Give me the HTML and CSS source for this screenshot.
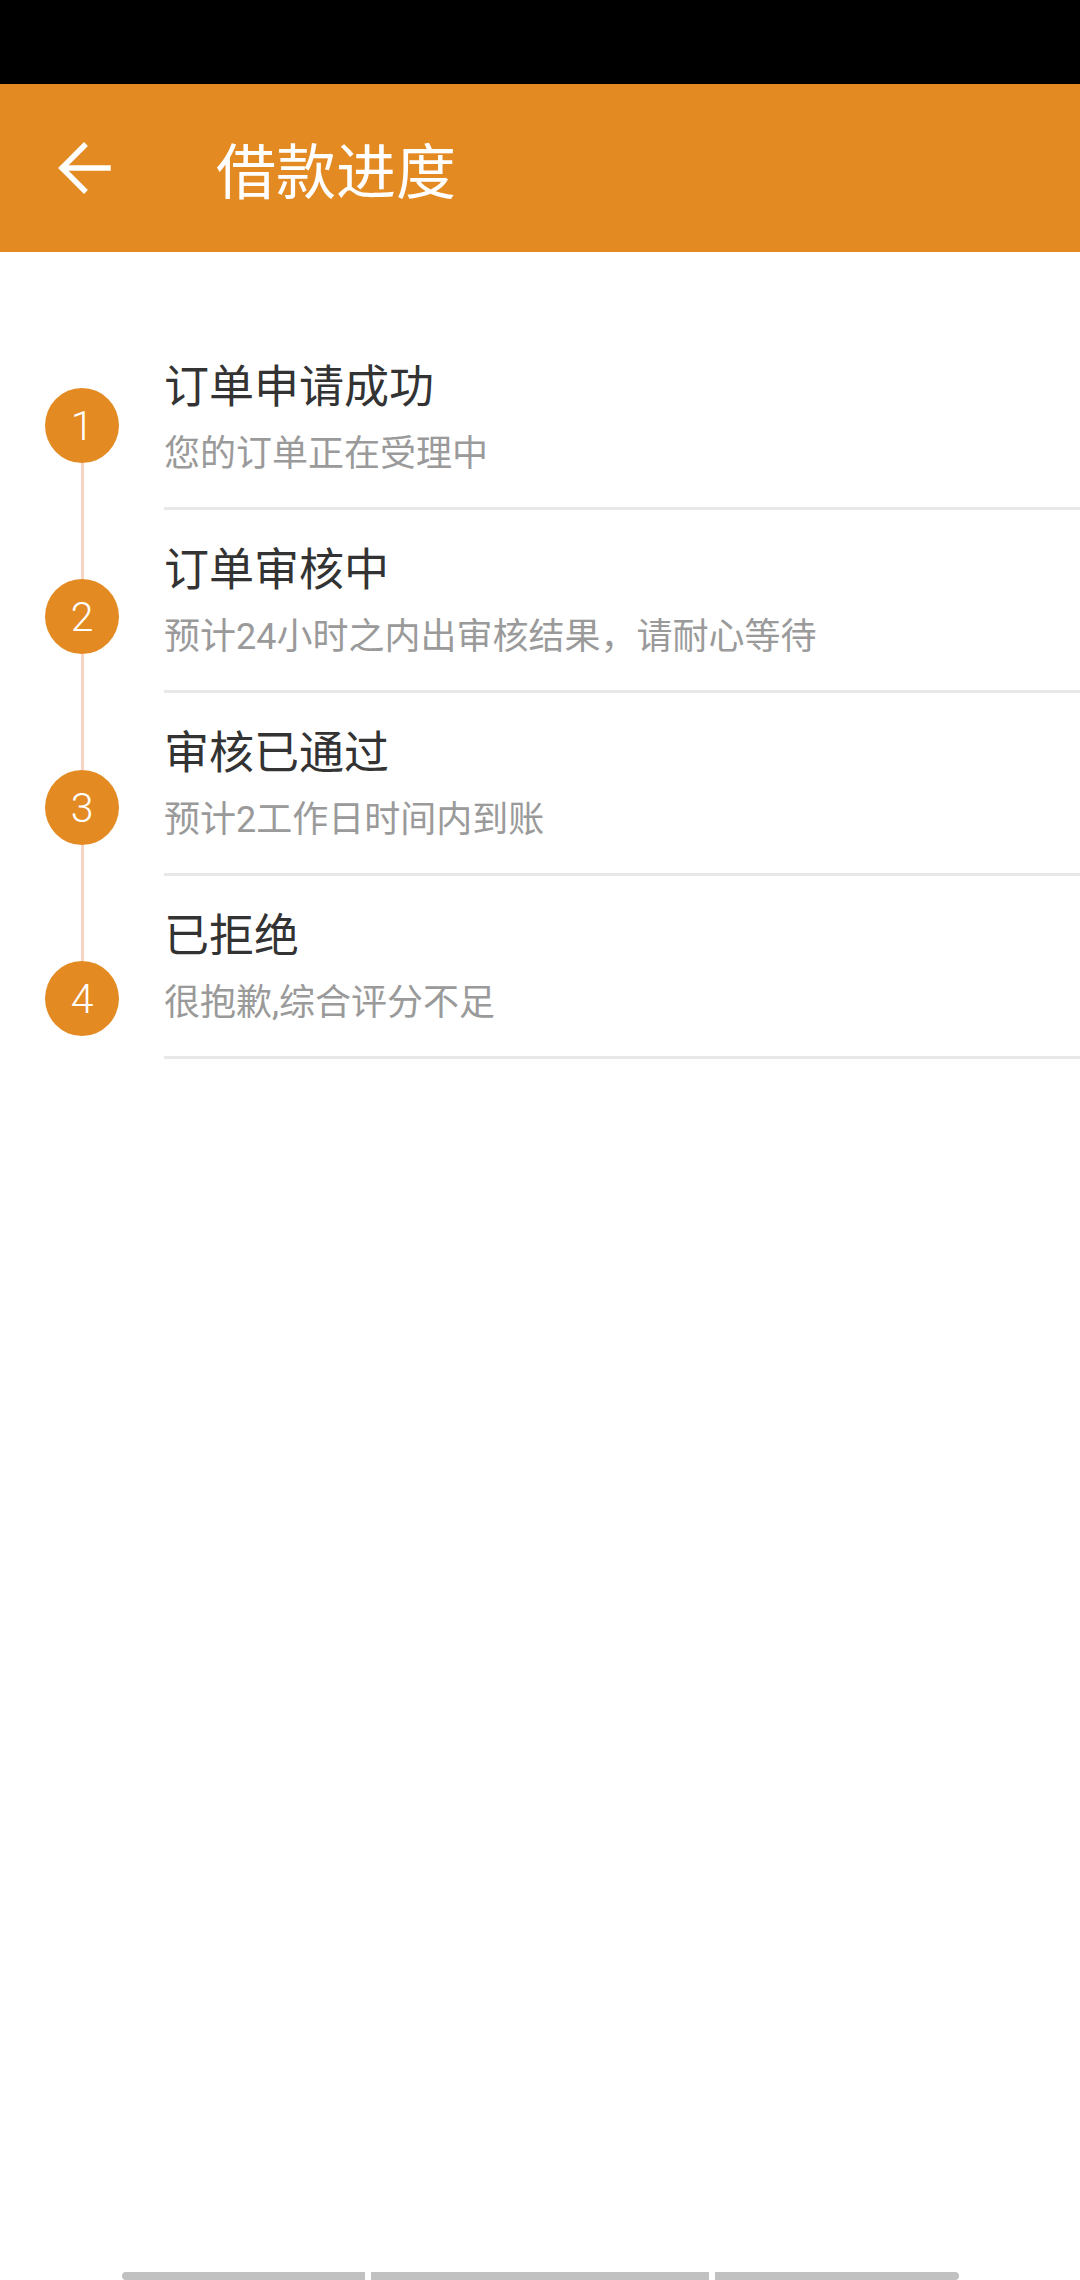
FILE: index.html
```html
<!DOCTYPE html>
<html lang="zh-CN">
<head>
    <meta charset="UTF-8">
    <meta name="viewport" content="width=device-width, initial-scale=1.0">
    <title>借款进度</title>
    <link rel="stylesheet" href="styles.css">
</head>
<body>
    <div class="status-bar"></div>
    <header class="toolbar">
        <svg class="back" width="72" height="72" viewBox="0 0 72 72">
            <path d="M60 36H15M36 14L14 36L36 58" fill="none" stroke="#fff" stroke-width="5.5" stroke-linecap="square"/>
        </svg>
        <h1>借款进度</h1>
    </header>
    <main class="progress">
        <div class="rail">
            <span class="dot first">1</span>
            <span class="seg"></span>
            <span class="dot">2</span>
            <span class="seg"></span>
            <span class="dot">3</span>
            <span class="seg"></span>
            <span class="dot">4</span>
        </div>
        <ul class="steps">
            <li>
                <div class="step-title">订单申请成功</div>
                <div class="step-desc">您的订单正在受理中</div>
            </li>
            <li>
                <div class="step-title">订单审核中</div>
                <div class="step-desc">预计24小时之内出审核结果，请耐心等待</div>
            </li>
            <li>
                <div class="step-title">审核已通过</div>
                <div class="step-desc">预计2工作日时间内到账</div>
            </li>
            <li>
                <div class="step-title">已拒绝</div>
                <div class="step-desc">很抱歉,综合评分不足</div>
            </li>
        </ul>
    </main>
    <div class="nav-bar">
        <span class="pill left"></span>
        <span class="pill mid"></span>
        <span class="pill right"></span>
    </div>
</body>
</html>
```

FILE: styles.css
```css
html, body {
    margin: 0;
    padding: 0;
}

body {
    display: flex;
    flex-direction: column;
    min-height: 100vh;
    background-color: #fff;
    font-family: "Roboto", "Noto Sans CJK SC", sans-serif;
}

.status-bar {
    height: 84px;
    background-color: #000;
}

.toolbar {
    display: flex;
    align-items: center;
    height: 168px;
    padding-left: 48px;
    background-color: #e38a23;
}

    .toolbar .back {
        display: block;
        flex: none;
    }

    .toolbar h1 {
        margin: 0 0 0 96px;
        font-family: "Noto Sans CJK SC", sans-serif;
        font-size: 60px;
        font-weight: 400;
        line-height: 80px;
        color: #fff;
    }

.progress {
    display: flex;
    padding-top: 75px;
}

.rail {
    display: flex;
    flex-direction: column;
    align-items: center;
    flex: none;
    width: 164px;
}

.dot {
    display: flex;
    align-items: center;
    justify-content: center;
    width: 74px;
    height: 75px;
    border-radius: 50%;
    background-color: #e38a23;
    color: #fff;
    font-family: "Roboto", sans-serif;
    font-size: 41px;
    font-weight: 300;
}

    .dot.first {
        margin-top: 61px;
    }

.seg {
    width: 3px;
    height: 116px;
    background-color: #f6d4c4;
}

.steps {
    flex: 1;
    margin: 0;
    padding: 0;
    list-style: none;
}

    .steps li {
        padding: 31px 0 29px;
        border-bottom: 3px solid #e8e8e8;
    }

.step-title {
    font-size: 45px;
    line-height: 60px;
    color: #333;
}

.step-desc {
    margin-top: 12px;
    font-size: 36px;
    line-height: 48px;
    color: #9a9a9a;
}

.nav-bar {
    display: flex;
    justify-content: center;
    gap: 6px;
    margin-top: auto;
}

.pill {
    height: 8px;
    background-color: #c1c1c1;
}

    .pill.left {
        width: 243px;
        border-radius: 4px 0 0 4px;
    }

    .pill.mid {
        width: 338px;
    }

    .pill.right {
        width: 244px;
        border-radius: 0 4px 4px 0;
    }
```
